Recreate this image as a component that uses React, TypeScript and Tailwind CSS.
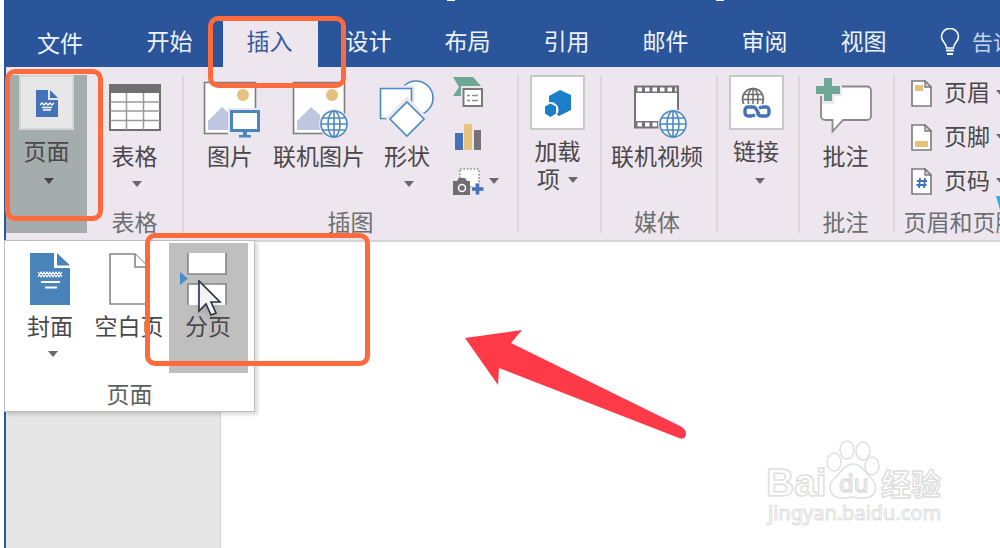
import React from 'react';

const Caret: React.FC<{ className?: string }> = ({ className = '' }) => (
  <svg width="10" height="6" viewBox="0 0 10 6" className={`shrink-0 text-[#6a686c] ${className}`}>
    <path d="M0 0h10L5 6z" fill="currentColor" />
  </svg>
);

const Globe: React.FC<{ cx: number; cy: number }> = ({ cx, cy }) => (
  <g transform={`translate(${cx} ${cy})`} fill="none" stroke="#4a8ac4" strokeWidth="1.6">
    <circle r="15" fill="#eee6ee" stroke="none" />
    <circle r="13" fill="#fff" />
    <ellipse rx="6" ry="13" />
    <path d="M0-13V13M-13 0H13M-11-6H11M-11 6H11" />
  </g>
);

const PhotoFrame = () => (
  <>
    <path d="M4.5 7.5h51v51h-51z" fill="#fff" stroke="#7d7b7e" strokeWidth="1.6" />
    <circle cx="43" cy="20" r="6" fill="#e5c17e" />
    <path d="M8 55V46L22 32l9 8v15z" fill="#bfc6e0" />
  </>
);

const PictureIcon = () => (
  <svg width="60" height="60" viewBox="0 0 60 60" className="overflow-visible">
    <PhotoFrame />
    <path d="M28 33h34v28H28z" fill="#eee6ee" />
    <path d="M31.500 36.500h27v19h-27z" fill="#fff" stroke="#4a86bd" strokeWidth="3" />
    <path d="M43 57h4v3h4v2.500H39V60h4z" fill="#4a86bd" />
  </svg>
);

const OnlinePictureIcon = () => (
  <svg width="60" height="60" viewBox="0 0 60 60" className="overflow-visible">
    <PhotoFrame />
    <Globe cx={45} cy={49} />
  </svg>
);

const ShapesIcon = () => (
  <svg width="60" height="60" viewBox="0 0 60 60" className="overflow-visible" fill="#fff" stroke="#4a8ac4" strokeWidth="1.6">
    <circle cx="39" cy="23" r="17" />
    <path d="M3.500 13.500h31v30h-31z" stroke="#eee6ee" strokeWidth="6" />
    <path d="M3.500 13.500h31v30h-31z" />
    <path d="M30 25l18 18-18 18-18-18z" stroke="#eee6ee" strokeWidth="5" />
    <path d="M30 27l17 17-17 17-17-17z" />
  </svg>
);

const TableIcon = () => (
  <svg width="54" height="60" viewBox="0 0 54 60">
    <path d="M2 10h50v45H2z" fill="#fff" stroke="#707070" strokeWidth="2" />
    <path d="M1 9h52v9H1z" fill="#707070" />
    <path d="M2 27h50M2 36h50M2 45.500h50M18.500 18v37M35.500 18v37" stroke="#9a9a9c" strokeWidth="1.5" />
  </svg>
);

const FilmIcon = () => (
  <svg width="60" height="60" viewBox="0 0 60 60" className="overflow-visible">
    <path d="M8 11.500h43v41H8z" fill="#fff" stroke="#757376" strokeWidth="2" />
    <path d="M8 14.500h43M8 49.500h43" stroke="#757376" strokeWidth="7" />
    <path d="M10.500 14.500h39M10.500 49.500h39" stroke="#fff" strokeWidth="4" strokeDasharray="4.500 3" />
    <Globe cx={46} cy={49} />
  </svg>
);

const CommentIcon = () => (
  <svg width="60" height="60" viewBox="0 0 60 60" className="overflow-visible">
    <path d="M9 11.500h42a4 4 0 0 1 4 4V41a4 4 0 0 1-4 4H27L16.500 56.500V45H9a4 4 0 0 1-4-4V15.500a4 4 0 0 1 4-4z" fill="#fff" stroke="#8a888b" strokeWidth="1.8" />
    <path d="M6 1h12v8h8v12h-8v8H6v-8H-2V9h8z" fill="#eee6ee" />
    <path d="M8 3h8v8h8v8h-8v7H8v-7H0v-8h8z" fill="#6fa795" />
  </svg>
);

const DocIcon = () => (
  <svg width="22" height="28" viewBox="0 0 22 28">
    <path d="M0 1h12v10h10v17H0z" fill="#4472b8" />
    <path d="M14 1l8 8h-8z" fill="#4472b8" />
    <path d="M4 16l2-2 2 2 2-2 2 2 2-2 2 2 2-2M6 18.500h10M7 21h8" fill="none" stroke="#fff" strokeWidth="1.3" />
  </svg>
);

const AddInIcon = () => (
  <svg width="28" height="28" viewBox="0 0 28 28">
    <path d="M16 1l11 5v15l-12 6-10-7V7z" fill="#1a7fc8" />
    <circle cx="6.500" cy="21" r="8" fill="#fff" />
    <path d="M6.500 14.500l5.500 3v7L6.500 28 1 24.500v-7z" fill="#1a7fc8" />
  </svg>
);

const LinkIcon = () => (
  <svg width="30" height="32" viewBox="0 0 30 32" fill="none">
    <circle cx="12" cy="12" r="10.500" stroke="#6f6d70" strokeWidth="1.6" />
    <ellipse cx="12" cy="12" rx="5" ry="10.500" stroke="#6f6d70" strokeWidth="1.5" />
    <path d="M12 2v20M2 7.500h20M2 12.500h20" stroke="#6f6d70" strokeWidth="1.5" />
    <path d="M1 17h29v15H1z" fill="#fff" />
    <path d="M11 29H7a3 3 0 0 1-3-3v-3a3 3 0 0 1 3-3h5q2 0 3 2l3 5" stroke="#4472b8" strokeWidth="3.400" />
    <path d="M21 20h4a3 3 0 0 1 3 3v3a3 3 0 0 1-3 3h-5q-2 0-3-2l-1-1M11 29l3-1M21 20l-3 1" stroke="#4472b8" strokeWidth="3.400" />
  </svg>
);

const SmartArtIcon = () => (
  <svg width="32" height="32" viewBox="0 0 32 32">
    <path d="M0 0h20l9 10H11v9H0l6-9z" fill="#6fa795" />
    <path d="M8 9h24v23H8z" fill="#eee6ee" />
    <path d="M10.500 12h18.500v17H10.500z" fill="#fff" stroke="#7b797c" strokeWidth="2" />
    <path d="M14 18.500h3M19 18.500h6M14 23.500h3M19 23.500h6" stroke="#8f8d90" strokeWidth="1.6" />
  </svg>
);

const ChartIcon = () => (
  <svg width="32" height="28" viewBox="0 0 32 28">
    <path d="M2 10h8v17H2z" fill="#4472b8" />
    <path d="M11 1h8v26h-8z" fill="#e8c37f" />
    <path d="M21 7h7v20h-7z" fill="#757376" />
  </svg>
);

const ScreenshotIcon = () => (
  <svg width="32" height="28" viewBox="0 0 32 28">
    <path d="M7 2h19v18H7z" fill="#fff" stroke="#8f8d90" strokeWidth="1.6" strokeDasharray="1.600 1.800" />
    <path d="M0 14h4l2-3h6l2 3h3v14H0z" fill="#6f6d70" />
    <circle cx="9" cy="21" r="3.500" fill="none" stroke="#fff" strokeWidth="1.5" />
    <path d="M24.500 16v12M18.500 22h12" stroke="#eee6ee" strokeWidth="7" />
    <path d="M24.500 16.500v11M19 22h11.500" stroke="#4472b8" strokeWidth="3.600" />
  </svg>
);

const PageIcon: React.FC<{ children: React.ReactNode }> = ({ children }) => (
  <svg width="21" height="27" viewBox="0 0 21 27" className="shrink-0">
    <path d="M1 1h13l6 6v19H1z" fill="#fff" stroke="#7b797c" strokeWidth="1.600" />
    <path d="M14 1v6h6z" fill="#d8d5d9" stroke="#7b797c" strokeWidth="1.400" />
    {children}
  </svg>
);

const CoverIcon = () => (
  <svg width="40" height="52" viewBox="0 0 40 52">
    <path d="M0 0h24v15h16v37H0z" fill="#4a82ba" />
    <path d="M27 0l13 12.500H27z" fill="#4a82ba" />
    <path d="M8 19l3 5 3-5 3 5 3-5 3 5 3-5 3 5 3-5M8 24l3-5 3 5 3-5 3 5 3-5 3 5 3-5 3 5" fill="none" stroke="#fff" strokeWidth="1.100" />
    <path d="M11 29h19M15 34.500h12" stroke="#fff" strokeWidth="2" />
  </svg>
);

const BlankIcon = () => (
  <svg width="40" height="52" viewBox="0 0 40 52" fill="#fff" stroke="#858585" strokeWidth="1.600">
    <path d="M1 1h25l13 13v37H1z" />
    <path d="M26 1v13h13" />
  </svg>
);

const BreakIcon = () => (
  <svg width="58" height="52" viewBox="0 0 58 52">
    <path d="M9 0h38v21H9zM9 31h38v21H9z" fill="#fff" />
    <path d="M9 0v21h38V0M9 52V31h38v21" fill="none" stroke="#858585" strokeWidth="1.600" />
    <path d="M1 19l8 6.500L1 32z" fill="#4a8fc8" />
  </svg>
);

interface ToolProps {
  icon: React.ReactNode;
  label: string;
  caret?: boolean;
  className?: string;
}

const Tool: React.FC<ToolProps> = ({ icon, label, caret, className = '' }) => (
  <button className={`flex flex-col items-center ${className}`}>
    <span className="flex h-[60px] items-center">{icon}</span>
    <span className="mt-1.5 leading-7">{label}</span>
    {caret && <Caret className="mt-3 ml-1" />}
  </button>
);

const BoxedTool: React.FC<ToolProps> = ({ icon, label, caret, className = '' }) => (
  <button className={`flex flex-col items-center ${className}`}>
    <span className="flex size-[55px] items-center justify-center border-2 border-[#c9c7ca] bg-white">{icon}</span>
    <span className="mt-1.5 leading-7">{label}</span>
    {caret && <Caret className="mt-3.5 ml-2" />}
  </button>
);

const Group: React.FC<{ title?: string; className?: string; children: React.ReactNode }> = ({ title, className = '', children }) => (
  <section className={`flex h-[158px] shrink-0 flex-col justify-between border-r-2 border-[#dad7d6] ${className}`}>
    <div className="flex justify-center">{children}</div>
    {title && <h2 className="h-[22px] text-center leading-5 whitespace-nowrap text-[#6b6f70]">{title}</h2>}
  </section>
);

const tabs = ['插入', '设计', '布局', '引用', '邮件', '审阅', '视图'];

const pageParts = [
  { label: '页眉', mark: <path d="M4 5h8v6H4z" fill="#e5c17e" /> },
  { label: '页脚', mark: <path d="M4 17h13v6H4z" fill="#e5c17e" /> },
  { label: '页码', mark: <path d="M9 10L8 20M14 10l-1 10M6 13h10M5.500 17h10" stroke="#4472b8" strokeWidth="1.800" /> },
];

const Header = () => (
  <header className="relative flex h-[67px] items-end gap-1 overflow-hidden bg-[#2b559a] text-[#eef3fb]">
    <i className="absolute top-0 left-[441px] h-px w-2 bg-white" />
    <i className="absolute top-0 left-[710px] h-px w-2 bg-white" />
    <button className="h-12 w-[110px] shrink-0 pr-0.5 pb-0.5">文件</button>
    <button className="h-12 w-[99px] shrink-0 pb-1.5">开始</button>
    {tabs.map((tab) => (
      <button
        key={tab}
        className={`h-12 w-[95px] shrink-0 pr-0.5 pb-1.5 ${tab === '插入' ? 'bg-[#eee6ee] text-[#3a5ba0]' : ''}`}
      >
        {tab}
      </button>
    ))}
    <button className="ml-6 flex h-12 shrink-0 items-center gap-3 pb-0.5 text-[21px] text-[#c3d3ec]">
      <svg width="20" height="28" viewBox="0 0 20 28" fill="none" stroke="#fff" strokeWidth="1.600">
        <path d="M6.500 20c0-5-5-6-5-11.500a8.500 8 0 0 1 17 0C18.500 14 13.500 15 13.500 20z" />
        <path d="M6 22.500h8M7 26h6" strokeWidth="2" />
      </svg>
      告诉我
    </button>
  </header>
);

const Ribbon = () => (
  <div className="flex h-[175px] overflow-hidden border-b-2 border-[#d6d3d6] bg-[#eee6ee] pt-2">
    <Group className="w-[178px]">
      <button className="flex h-[158px] w-[81px] shrink-0 flex-col items-center bg-[#a4adac]">
        <span className="flex size-[55px] items-center justify-center border-2 border-[#d3d5d6] bg-[#e7e7e8]">
          <DocIcon />
        </span>
        <span className="mt-1.5 leading-7">页面</span>
        <Caret className="mt-3.5 ml-1 text-[#444]" />
      </button>
      <div className="flex flex-1 flex-col items-center justify-between">
        <Tool icon={<TableIcon />} label="表格" caret />
        <h2 className="h-[22px] leading-5 text-[#6b6f70]">表格</h2>
      </div>
    </Group>
    <Group title="插图" className="w-[335px]">
      <div className="flex flex-1 gap-3 pl-[15px]">
        <Tool icon={<PictureIcon />} label="图片" className="w-[62px]" />
        <Tool icon={<OnlinePictureIcon />} label="联机图片" className="w-[92px]" />
        <Tool icon={<ShapesIcon />} label="形状" caret className="w-[60px]" />
        <div className="flex flex-col gap-2 pl-1">
          <button aria-label="SmartArt" className="flex h-9 items-center"><SmartArtIcon /></button>
          <button aria-label="图表" className="flex h-9 items-center"><ChartIcon /></button>
          <button aria-label="屏幕截图" className="flex h-9 items-center gap-1"><ScreenshotIcon /><Caret /></button>
        </div>
      </div>
    </Group>
    <Group className="w-[83px] pr-1">
      <button className="flex flex-col items-center">
        <span className="flex size-[55px] items-center justify-center border-2 border-[#c9c7ca] bg-white"><AddInIcon /></span>
        <span className="mt-1.5 leading-7">
          加载<br />项<Caret className="mb-1 ml-2 inline" />
        </span>
      </button>
    </Group>
    <Group title="媒体" className="w-[116px] pr-1">
      <Tool icon={<FilmIcon />} label="联机视频" />
    </Group>
    <Group className="w-[82px] pr-1">
      <BoxedTool icon={<LinkIcon />} label="链接" caret />
    </Group>
    <Group title="批注" className="w-[95px] pr-0.5">
      <Tool icon={<CommentIcon />} label="批注" />
    </Group>
    <Group title="页眉和页脚" className="w-[134px]">
      <div className="flex flex-1 flex-col gap-2 pl-4">
        {pageParts.map((part) => (
          <button key={part.label} className="flex h-9 items-center gap-3 leading-8">
            <PageIcon>{part.mark}</PageIcon>
            <span className="pb-1">{part.label}</span>
            <Caret className="-ml-1.5" />
          </button>
        ))}
      </div>
    </Group>
  </div>
);

const MenuItem: React.FC<ToolProps> = ({ icon, label, caret, className = '' }) => (
  <button className={`flex h-[130px] w-[79px] flex-col items-center pt-2.5 pr-px ${className}`}>
    {icon}
    <span className="mt-1.5 leading-7">{label}</span>
    {caret && <Caret className="mt-3 ml-1.5" />}
  </button>
);

const PagesMenu = () => (
  <div className="absolute top-[240px] left-1 border border-[#bdbdbd] bg-white px-1.5 pt-0.5 pb-1 shadow-[3px_3px_3px_#00000022]">
    <div className="flex">
      <MenuItem icon={<CoverIcon />} label="封面" caret />
      <MenuItem icon={<BlankIcon />} label="空白页" />
      <MenuItem icon={<BreakIcon />} label="分页" className="bg-[#bfbfbf]" />
    </div>
    <h2 className="mt-1.5 text-center leading-7 text-[#5c5f60]">页面</h2>
  </div>
);

const Watermark = () => (
  <svg
    width="190"
    height="96"
    viewBox="0 0 190 96"
    className="absolute right-12 bottom-3"
    fill="#fff"
    stroke="#dedede"
    strokeWidth="1.500"
    fontFamily='"Liberation Sans", "Noto Sans CJK SC", sans-serif'
  >
    <text x="4" y="56" fontSize="39" fontWeight="700">Bai</text>
    <ellipse cx="72" cy="22" rx="7" ry="9" />
    <ellipse cx="85" cy="10" rx="7" ry="9" />
    <ellipse cx="101" cy="11" rx="7" ry="9" />
    <ellipse cx="110" cy="26" rx="7" ry="9" />
    <path d="M91 24c9 0 12 9 18 14s8 20-8 20c-5 0-7-1-10-1s-6 1-11 1c-14 0-14-14-8-19s10-15 19-15z" />
    <text x="77" y="52" fontSize="24" fontFamily='"Noto Sans", sans-serif'>du</text>
    <text x="119" y="55" fontSize="30" fontWeight="700">经验</text>
    <text x="6" y="80" fontSize="20" strokeWidth="1" fontFamily='"Noto Sans", sans-serif'>jingyan.baidu.com</text>
  </svg>
);

export default function App() {
  return (
    <div className='relative flex min-h-screen flex-col overflow-hidden bg-white pl-1 font-["Noto_Sans_CJK_SC",sans-serif] text-[23px] text-[#4a484b]'>
      <div className="flex flex-1 flex-col border-l-2 border-[#2b559a]">
        <Header />
        <Ribbon />
        <main className="flex flex-1">
          <aside className="w-[215px] border-r border-[#d5d5d5] bg-[#e6e6e6]" />
          <div className="flex-1 bg-white" />
        </main>
      </div>

      <PagesMenu />
      <Watermark />

      {/* cursor sits under the highlight boxes */}
      <svg width="28" height="38" viewBox="0 0 28 38" className="absolute top-[280px] left-[198px] drop-shadow-md">
        <path d="M1 1v30l7-7 5 11 5-2-5-11h9z" fill="#f4f4f6" stroke="#2b2f3a" strokeWidth="1.600" />
      </svg>

      {/* annotations */}
      <div className="absolute top-[69px] left-[5px] h-[152px] w-[98px] rounded-[10px] border-[5px] border-[#ff6a3d]" />
      <div className="absolute top-4 left-[208px] h-[72px] w-[138px] rounded-[10px] border-[5px] border-[#ff6a3d]" />
      <div className="absolute top-[233px] left-[145px] h-[133px] w-[225px] rounded-[10px] border-[5px] border-[#ff6a3d]" />
      <svg width="224" height="112" viewBox="0 0 224 112" className="absolute top-[328px] left-[464px]">
        <path d="M1 10L58 2 47 15l171 84q6 5 3 10-2 3-6 1L35 40l-1 17z" fill="#fe3a48" />
      </svg>
      <svg width="4" height="14" viewBox="0 0 4 14" className="absolute top-[196px] right-0">
        <path d="M0 0h4v14z" fill="#27b3ea" />
      </svg>
    </div>
  );
}
